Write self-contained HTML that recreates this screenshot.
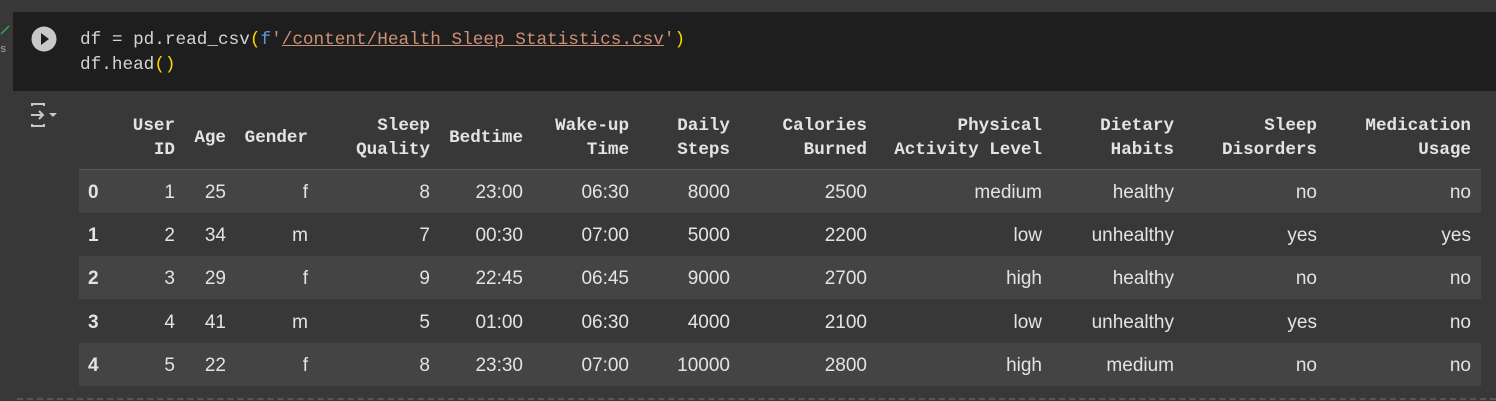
<!DOCTYPE html>
<html><head><style>
body{margin:0;width:1496px;height:401px;background:#383838;position:relative;overflow:hidden;font-family:"Liberation Sans",Arial,sans-serif}
.code{position:absolute;left:13px;top:12px;width:1483px;height:79px;background:#1e1e1e}
.ln{position:absolute;left:80px;font:17.7px "Liberation Mono","DejaVu Sans Mono",monospace;color:#d4d4d4;white-space:pre}
.h{position:absolute;font:bold 17.6px "Liberation Mono","DejaVu Sans Mono",monospace;color:#e3e3e3;text-align:right;line-height:24px;white-space:pre}
.row{position:absolute;left:79px;width:1402px;height:43px}
.c{position:absolute;top:1px;font-size:19px;color:#e3e3e3;line-height:43px;white-space:nowrap}
.idx{font-weight:bold}
</style></head><body>
<svg style="position:absolute;left:0;top:24px" width="12" height="30"><path d="M1 10 L9 2" stroke="#34a853" stroke-width="1.5" fill="none"/><text x="-2" y="28" font-size="11" fill="#aaa" font-family="Liberation Sans">ls</text></svg>
<div class="code"></div>
<svg style="position:absolute;left:31px;top:26px" width="26" height="26"><circle cx="13" cy="13" r="12.5" fill="#c8c8c8"/><path d="M10 7 L18 13 L10 19Z" fill="#1e1e1e"/></svg>
<div class="ln" style="top:30px">df = pd.read_csv<span style="color:#ffd700">(</span><span style="color:#569cd6">f</span><span style="color:#ce9178">'<span style="text-decoration:underline">/content/Health_Sleep_Statistics.csv</span>'</span><span style="color:#ffd700">)</span></div>
<div class="ln" style="top:55px">df.head<span style="color:#ffd700">()</span></div>
<svg style="position:absolute;left:30px;top:103px" width="32" height="26" fill="none" stroke="#c8c8c8" stroke-width="2"><path d="M2 3 V1 H14 V3 M2 21 V23 H14 V21 M1 12 H13 M9 8 L13 12 L9 16"/><path d="M19 10 H27 L23 14Z" fill="#c8c8c8" stroke="none"/></svg>

<div class="h" style="right:1321px;top:114px">User<br>ID</div>
<div class="h" style="right:1270px;top:126px">Age</div>
<div class="h" style="right:1188px;top:126px">Gender</div>
<div class="h" style="right:1066px;top:114px">Sleep<br>Quality</div>
<div class="h" style="right:973px;top:126px">Bedtime</div>
<div class="h" style="right:867px;top:114px">Wake-up<br>Time</div>
<div class="h" style="right:766px;top:114px">Daily<br>Steps</div>
<div class="h" style="right:629px;top:114px">Calories<br>Burned</div>
<div class="h" style="right:454px;top:114px">Physical<br>Activity Level</div>
<div class="h" style="right:322px;top:114px">Dietary<br>Habits</div>
<div class="h" style="right:179px;top:114px">Sleep<br>Disorders</div>
<div class="h" style="right:25px;top:114px">Medication<br>Usage</div>
<div style="position:absolute;left:79px;top:169px;width:1402px;height:1px;background:#5a5a5a"></div>

<div id="rows"></div>
<div style="position:absolute;left:17px;top:398px;width:1479px;border-top:2px dashed #555"></div>
<script>
var data=[["0","1","25","f","8","23:00","06:30","8000","2500","medium","healthy","no","no"],
["1","2","34","m","7","00:30","07:00","5000","2200","low","unhealthy","yes","yes"],
["2","3","29","f","9","22:45","06:45","9000","2700","high","healthy","no","no"],
["3","4","41","m","5","01:00","06:30","4000","2100","low","unhealthy","yes","no"],
["4","5","22","f","8","23:30","07:00","10000","2800","high","medium","no","no"]];
var rights=[175,226,308,430,523,629,730,867,1042,1174,1317,1471];
var h="";
data.forEach(function(r,i){
 h+='<div class="row" style="top:'+(170+i*43.2)+'px;background:'+(i%2==0?'#444444':'#383838')+'">';
 h+='<div class="c idx" style="left:9px">'+r[0]+'</div>';
 for(var j=1;j<r.length;j++) h+='<div class="c" style="right:'+(1481-rights[j-1])+'px">'+r[j]+'</div>';
 h+='</div>';
});
document.getElementById('rows').innerHTML=h;
</script>
</body></html>
